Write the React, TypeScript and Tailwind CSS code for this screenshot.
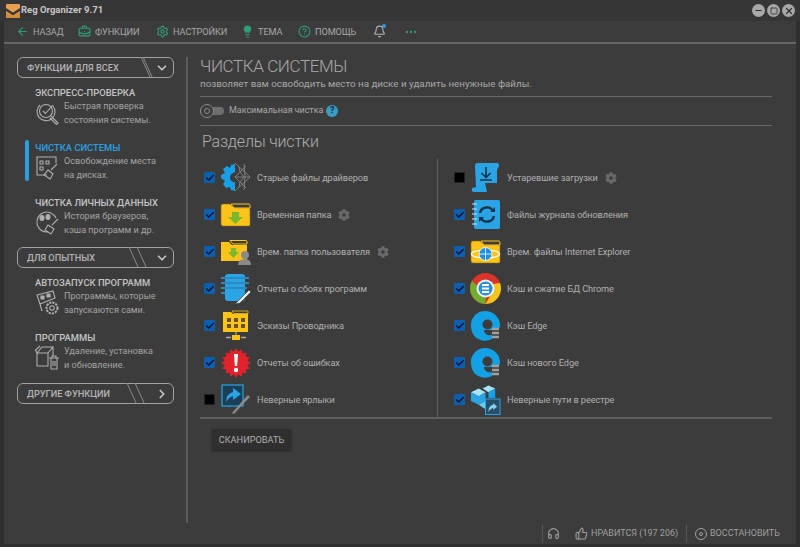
import { ArrowLeft, Bell, BriefcaseBusiness, ChevronDown, ChevronRight, CircleHelp, Ellipsis, Headphones, Lightbulb, Minus, Settings, Square, ThumbsUp, X, Check } from "lucide-react";
import { FaCog } from "react-icons/fa";
import type { ReactNode } from "react";

const font = "font-['Roboto','Open_Sans',sans-serif]";

function Logo() {
  return (
    <svg width="14" height="14" viewBox="0 0 14 14">
      <rect x="0" y="0" width="14" height="14" rx="1" fill="#e8a050" />
      <path d="M0 4 L7 8.5 L14 4 L14 7 L7 11.5 L0 7 Z" fill="#3a3a3a" />
      <path d="M0 8 L7 12.5 L14 8 V14 H0 Z" fill="#d68a3a" />
    </svg>
  );
}

function WinButton({ children }: { children: ReactNode }) {
  return (
    <div className="w-[13px] h-[13px] rounded-full bg-[#a8a8a8] flex items-center justify-center text-[#333]">
      {children}
    </div>
  );
}

function ToolItem({ icon, label, className }: { icon: ReactNode; label: string; className: string }) {
  return (
    <div className={`flex items-center gap-[4px] ${className}`}>
      {icon}
      <span className="text-[9.2px] tracking-[-0.1px] text-[#a8a8a8]">{label}</span>
    </div>
  );
}

function SectionButton({ label, open = true, stripeAt, double = true }: { label: string; open?: boolean; stripeAt: string; double?: boolean }) {
  return (
    <div className="relative ml-[13px] h-[21px] w-[157px] rounded-[6px] border border-[#a0a0a0] flex items-center justify-between pl-[9px] pr-[4px]">
      <span className="text-[9.2px] font-medium text-[#b4b4b4]">{label}</span>
      <svg width="24" height="21" viewBox="0 0 24 21" className={`absolute top-[-1px] ${stripeAt}`}>
        {double ? (
          <path d="M1 0 L10 20 M9 0 L18 20" stroke="#8a8a8a" strokeWidth="1" fill="none" />
        ) : (
          <path d="M1 0 L10 20 M3 0 L12 20" stroke="#8a8a8a" strokeWidth="1" fill="none" />
        )}
      </svg>
      {open ? (
        <ChevronDown size={14} strokeWidth={3} className="text-[#c4c4c4]" />
      ) : (
        <ChevronRight size={14} strokeWidth={3} className="text-[#c4c4c4]" />
      )}
    </div>
  );
}

function NavItem({
  title,
  lines,
  icon,
  active,
}: {
  title: string;
  lines: string[];
  icon: ReactNode;
  active?: boolean;
}) {
  return (
    <div className="relative pl-[31px] h-[41px]">
      {active && <div className="absolute left-[21px] top-[-2px] w-[4px] h-[41px] rounded-full bg-[#2a9fe0]" />}
      <div className={`text-[9.4px] leading-[12px] font-medium whitespace-nowrap ${active ? "text-[#2a9fe0]" : "text-[#c4c4c4]"}`}>
        {title}
      </div>
      <div className="flex">
        <div className="w-[29px] h-[27px] flex items-center">{icon}</div>
        <div className="text-[9.1px] leading-[14px] text-[#a4a4a4] whitespace-nowrap">
          {lines.map((l) => (
            <div key={l}>{l}</div>
          ))}
        </div>
      </div>
    </div>
  );
}

const navStroke = { fill: "none", stroke: "#b0b0b0", strokeWidth: 1.1 };

function ExpressIcon() {
  return (
    <svg width="25" height="25" viewBox="0 0 25 25" {...navStroke}>
      <path d="M5 5 A9 9 0 1 0 18 6" />
      <circle cx="11" cy="11" r="6.5" />
      <path d="M8 11 L10.5 13.5 L18 5" />
      <path d="M16 16 L23 23 L21.5 24.5 L15 18" />
    </svg>
  );
}
function CleanIcon() {
  return (
    <svg width="25" height="25" viewBox="0 0 25 25" {...navStroke}>
      <path d="M12 20 H2 V2 H21 V8" />
      <path d="M5 6 h3 v3 h-3 z M11 6 h3 v3 h-3 z M5 12 h3 v3 h-3 z" />
      <path d="M22 9 L16 15 M13 15 L18 19 L15 24 L9 20 Z" />
    </svg>
  );
}
function PrivateIcon() {
  return (
    <svg width="25" height="25" viewBox="0 0 25 25" {...navStroke}>
      <path d="M13 22 A10 10 0 1 1 21 8" />
      <ellipse cx="7" cy="8" rx="2" ry="2.5" fill="#b0b0b0" />
      <ellipse cx="13" cy="7" rx="2" ry="2.5" fill="#b0b0b0" />
      <path d="M23 9 L17 15 M13 15 L19 19 L16 24 L10 20 Z" />
    </svg>
  );
}
function AutorunIcon() {
  return (
    <svg width="25" height="25" viewBox="0 0 25 25" {...navStroke}>
      <path d="M2 5 L18 1 L20 8 L5 14 Z M5 14 L7 21" />
      <path d="M6 6 h3 v3 h-3 z M12 4 h3 v3 h-3 z" fill="#b0b0b0" />
      <circle cx="17" cy="18" r="2.2" />
      <circle cx="17" cy="18" r="5.5" strokeDasharray="2.2 1" strokeWidth="2" />
    </svg>
  );
}
function ProgramsIcon() {
  return (
    <svg width="25" height="27" viewBox="0 0 25 27" {...navStroke}>
      <path d="M2 9 L13 9 L13 22 L2 22 Z M2 9 L7 3 L18 3 L13 9 M18 3 L18 12 M2 9 L0.5 6 L5 2" />
      <path d="M14 14 H24 M16 14 V25 H22 V14 M18 17 V22 M20 17 V22 M17 14 V12 H21 V14" />
    </svg>
  );
}

function Gear() {
  return <FaCog size={12} className="text-[#6a6a6a] ml-[7px]" />;
}

function Tick({ on }: { on: boolean }) {
  if (!on) return <div className="w-[11px] h-[11px] bg-black border border-[#222]" />;
  return (
    <div className="w-[11px] h-[11px] bg-[#0a5fb0] rounded-[1px] flex items-center justify-center">
      <Check size={10} strokeWidth={3.5} className="text-[#08122a]" />
    </div>
  );
}

function Folder({ w = 31, children }: { w?: number; children?: ReactNode }) {
  return (
    <svg width={w} height="24" viewBox="0 0 31 24">
      <path d="M1 3 Q1 1 3 1 H10 L14 5 H29 Q30 5 30 7 V22 Q30 23 28 23 H3 Q1 23 1 21 Z" fill="#fcc419" stroke="#8a6a10" strokeWidth="0.6" />
      <path d="M11 1 H29 Q30 1 30 3 V5 H14 Z" fill="#3c3c3c" stroke="#fcc419" strokeWidth="1" />
      {children}
    </svg>
  );
}

function TempFolder() {
  return (
    <Folder>
      <path d="M12 9 H19 V14 H23 L15.5 21 L8 14 H12 Z" fill="#7cb82f" />
    </Folder>
  );
}

function UserFolder() {
  return (
    <svg width="31" height="26" viewBox="0 0 31 26">
      <path d="M1 3 H9 L12 6 H27 V22 H1 Z" fill="#fcc419" />
      <path d="M10 1.5 H26 Q27 1.5 27 3 V5 H13 Z" fill="#3c3c3c" stroke="#fcc419" />
      <path d="M11 9 H16 V13 H19 L13.5 19 L8 13 H11 Z" fill="#7cb82f" />
      <circle cx="25" cy="16" r="4" fill="#8a8a8a" />
      <path d="M18 26 Q18 20 25 20 Q31 20 31 26 Z" fill="#8a8a8a" />
    </svg>
  );
}

function DriverIcon() {
  return (
    <svg width="31" height="31" viewBox="0 0 31 31">
      <path d="M15 2 L15 29 L11 28 L10 25 L6 26 L3 22 L5 19 L1 16 L1 13 L5 11 L3 7 L7 4 L10 6 L11 3 Z" fill="#18a0e6" />
      <circle cx="15" cy="15.5" r="5" fill="#3c3c3c" />
      <g fill="none" stroke="#8f8f8f" strokeWidth="0.8">
        <path d="M15 1 L30 15 L15 29 M15 15 L30 15 M15 15 L26 4 M15 15 L26 26" />
        <path d="M19 5 L20 10 L24 15 L20 20 L19 25 M24 2 L25 15 L24 28" />
      </g>
    </svg>
  );
}

function NotebookIcon() {
  return (
    <svg width="31" height="31" viewBox="0 0 31 31">
      <rect x="5" y="1" width="20" height="27" rx="3" fill="#2ba4e6" />
      <g stroke="#2ba4e6" strokeWidth="1.5">
        <path d="M1 5 H29 M1 10 H29 M1 15 H27 M1 20 H22" />
      </g>
      <g stroke="#3c3c3c" strokeWidth="0.5">
        <path d="M5 5 H25 M5 10 H25 M5 15 H25" />
      </g>
      <path d="M17 29 L29 17 L31 19 L20 30 L15 31 Z" fill="#eaeaea" stroke="#3c3c3c" strokeWidth="0.7" />
    </svg>
  );
}

function ThumbFolderIcon() {
  return (
    <svg width="28" height="31" viewBox="0 0 28 31">
      <path d="M1 2 H9 L11 4 H26 V22 H1 Z" fill="#fcc419" />
      <path d="M10 1 H26 V3.5 H12 Z" fill="#3c3c3c" stroke="#fcc419" strokeWidth="0.8" />
      <g fill="#6b5200">
        <rect x="5" y="8" width="4" height="4" />
        <rect x="12" y="8" width="4" height="4" />
        <rect x="19" y="8" width="4" height="4" />
        <rect x="5" y="14" width="4" height="4" />
        <rect x="12" y="14" width="4" height="4" />
        <rect x="19" y="14" width="4" height="4" />
      </g>
      <path d="M14 22 V26" stroke="#bbb" />
      <rect x="10" y="25" width="8" height="5" fill="#fcc419" />
      <path d="M4 27.5 H9 M19 27.5 H24" stroke="#aaa" strokeWidth="1.4" />
    </svg>
  );
}

function ErrorIcon() {
  const pts: string[] = [];
  for (let i = 0; i < 32; i++) {
    const r = i % 2 === 0 ? 15 : 11.5;
    const a = (i * Math.PI) / 16;
    pts.push(`${15 + r * Math.cos(a)},${15 + r * Math.sin(a)}`);
  }
  return (
    <svg width="30" height="30" viewBox="0 0 30 30">
      <polygon points={pts.join(" ")} fill="#e2222b" />
      <path d="M13 6 H17 L16.2 18 H13.8 Z" fill="#fff" />
      <circle cx="15" cy="22" r="2.2" fill="#fff" />
    </svg>
  );
}

function ShortcutIcon() {
  return (
    <svg width="30" height="31" viewBox="0 0 30 31">
      <rect x="1" y="1" width="21" height="21" fill="#1b3f55" stroke="#2ba4e6" strokeWidth="1.2" />
      <path d="M5 18 Q5 10 12 8 V4 L20 10 L12 16 V12 Q8 13 5 18 Z" fill="#2ba4e6" />
      <path d="M11 29 L24 14 L27 11 L29 13 L26 16 L13 30 Z" fill="#8a8a8a" />
    </svg>
  );
}

function ScrollIcon() {
  return (
    <svg width="30" height="31" viewBox="0 0 30 31">
      <path d="M4 4 Q4 1 7 1 H26 Q28 1 28 4 L26 8 V21 H14 L16 30 H3 Q0 30 1 26 L5 25 Z" fill="#2ba4e6" />
      <path d="M15 5 V15 M10.5 11 L15 15.5 L19.5 11 M9 18 H21" stroke="#12364e" strokeWidth="1.6" fill="none" />
    </svg>
  );
}

function JournalIcon() {
  return (
    <svg width="30" height="31" viewBox="0 0 30 31">
      <rect x="3" y="1" width="26" height="29" rx="2" fill="#2ba4e6" />
      <path d="M1 5 H6 M1 10 H6 M1 15 H6 M1 20 H6 M1 25 H6" stroke="#cfe8f5" strokeWidth="1" />
      <path d="M9 14 A7 7 0 0 1 22 12 M23 17 A7 7 0 0 1 10 19" stroke="#103349" strokeWidth="2.4" fill="none" />
      <path d="M19 13 L24 13 L24 8 Z M13 18 L8 18 L8 23 Z" fill="#103349" />
    </svg>
  );
}

function IEFolder() {
  return (
    <Folder>
      <ellipse cx="15.5" cy="14" rx="14" ry="4" fill="none" stroke="#fff" strokeWidth="1.2" />
      <circle cx="15.5" cy="14" r="6.5" fill="#1f8fdc" stroke="#fff" strokeWidth="0.8" />
      <path d="M15.5 7.5 V20.5 M9 14 H22" stroke="#fff" strokeWidth="0.8" />
    </Folder>
  );
}

function ChromeIcon() {
  return (
    <svg width="31" height="31" viewBox="0 0 31 31">
      <circle cx="15.5" cy="15.5" r="15.5" fill="#d9352b" />
      <path d="M15.5 31 A15.5 15.5 0 0 1 2 8 L10 15.5 L15.5 22 Z" fill="#6fae2e" />
      <path d="M15.5 31 A15.5 15.5 0 0 0 30 10 L16 12 L22 20 Z" fill="#f5c518" />
      <circle cx="15.5" cy="15.5" r="9" fill="#f2f2f2" />
      <circle cx="15.5" cy="15.5" r="7" fill="#2b8fd8" />
      <path d="M12 12 H19 M12 15.5 H19 M12 19 H19" stroke="#fff" strokeWidth="2" />
    </svg>
  );
}

function EdgeIcon() {
  return (
    <svg width="31" height="32" viewBox="0 0 31 32">
      <path d="M15 1 C24 1 30 8 30 15 C30 18 29 19 27 20 L14 20 C14 24 18 26 22 25 L22 29 C14 33 2 30 1 17 C0 8 7 1 15 1 Z" fill="#14a0e4" />
      <circle cx="17.5" cy="14.5" r="5" fill="#3c3c3c" />
      <path d="M22 19 H29 M22 23 H29 M22 27 H29" stroke="#a0a0a0" strokeWidth="2.4" />
    </svg>
  );
}

function RegistryIcon() {
  return (
    <svg width="32" height="32" viewBox="0 0 32 32">
      <path d="M1 8 L9 4 L16 8 L9 12 Z M13 4 L19 1 L26 4 L19 8 Z" fill="#a8e4f8" />
      <path d="M1 8 L9 12 V21 L1 17 Z M16 8 L9 12 V21 L16 17 Z" fill="#2ba4e6" />
      <path d="M19 8 L26 4 V14 L19 14 Z" fill="#18a0e6" />
      <path d="M9 21 L16 17 L22 20 L15 25 Z" fill="#6fc8ee" />
      <rect x="16" y="15" width="15" height="16" fill="#26506a" stroke="#2ba4e6" />
      <path d="M19 28 Q19 22 24 21 V19 L28 23 L24 26 V24 Q21 25 19 28 Z" fill="#8ed0f0" />
    </svg>
  );
}

type Row = { on: boolean; icon: ReactNode; label: string; gear?: boolean };

const leftRows: Row[] = [
  { on: true, icon: <DriverIcon />, label: "Старые файлы драйверов" },
  { on: true, icon: <TempFolder />, label: "Временная папка", gear: true },
  { on: true, icon: <UserFolder />, label: "Врем. папка пользователя", gear: true },
  { on: true, icon: <NotebookIcon />, label: "Отчеты о сбоях программ" },
  { on: true, icon: <ThumbFolderIcon />, label: "Эскизы Проводника" },
  { on: true, icon: <ErrorIcon />, label: "Отчеты об ошибках" },
  { on: false, icon: <ShortcutIcon />, label: "Неверные ярлыки" },
];

const rightRows: Row[] = [
  { on: false, icon: <ScrollIcon />, label: "Устаревшие загрузки", gear: true },
  { on: true, icon: <JournalIcon />, label: "Файлы журнала обновления" },
  { on: true, icon: <IEFolder />, label: "Врем. файлы Internet Explorer" },
  { on: true, icon: <ChromeIcon />, label: "Кэш и сжатие БД Chrome" },
  { on: true, icon: <EdgeIcon />, label: "Кэш Edge" },
  { on: true, icon: <EdgeIcon />, label: "Кэш нового Edge" },
  { on: true, icon: <RegistryIcon />, label: "Неверные пути в реестре" },
];

function CleanRow({ row }: { row: Row }) {
  return (
    <div className="h-[37px] flex items-center">
      <Tick on={row.on} />
      <div className="w-[31px] ml-[5px] flex items-center justify-center">{row.icon}</div>
      <span className="ml-[6px] text-[9.2px] tracking-[-0.1px] text-[#b0b0b0] whitespace-nowrap">{row.label}</span>
      {row.gear && <Gear />}
    </div>
  );
}

export default function App() {
  return (
    <div className={`${font} w-[800px] h-[547px] bg-[#2f2f2f] flex flex-col overflow-hidden`}>
      <div className="h-[21px] shrink-0 flex items-center bg-[#363636] pl-[6px] pr-[5px]">
        <Logo />
        <span className="ml-[1px] text-[9.5px] font-bold text-[#c8c8c8]">Reg Organizer 9.71</span>
        <div className="ml-auto flex gap-[2px]">
          <WinButton><Minus size={9} strokeWidth={3} /></WinButton>
          <WinButton><Square size={8} strokeWidth={2.5} /></WinButton>
          <WinButton><X size={10} strokeWidth={3} /></WinButton>
        </div>
      </div>
      <div className="flex-1 mx-[4px] mb-[3px] bg-[#3c3c3c] flex flex-col min-h-0">
        <div className="h-[23px] shrink-0 flex items-center pl-[12px] border-b-2 border-[#666666]">
          <ToolItem className="w-[62px]" icon={<ArrowLeft size={13} className="text-[#2f9d78]" />} label="НАЗАД" />
          <ToolItem className="w-[78px]" icon={<BriefcaseBusiness size={13} className="text-[#2f9d78]" />} label="ФУНКЦИИ" />
          <ToolItem className="w-[85px]" icon={<Settings size={13} className="text-[#2f9d78]" />} label="НАСТРОЙКИ" />
          <ToolItem className="w-[57px]" icon={<Lightbulb size={13} className="text-[#2f9d78] fill-[#2f9d78]" />} label="ТЕМА" />
          <ToolItem className="w-[75px]" icon={<CircleHelp size={13} className="text-[#2f9d78]" />} label="ПОМОЩЬ" />
          <div className="relative w-[31px]">
            <Bell size={13} className="text-[#b0b0b0]" />
            <div className="absolute left-[9px] top-[-1px] w-[4px] h-[4px] rounded-full bg-[#2a9fe0]" />
          </div>
          <Ellipsis size={14} className="text-[#2f9d78]" />
        </div>
        <div className="flex-1 flex min-h-0">
          <div className="w-[184px] shrink-0 mt-[13px] border-r-2 border-[#5a5a5a]">
            <SectionButton label="ФУНКЦИИ ДЛЯ ВСЕХ" stripeAt="left-[122px]" double={false} />
            <div className="mt-[9px] flex flex-col gap-[14px]">
              <NavItem title="ЭКСПРЕСС-ПРОВЕРКА" lines={["Быстрая проверка", "состояния системы."]} icon={<ExpressIcon />} />
              <NavItem active title="ЧИСТКА СИСТЕМЫ" lines={["Освобождение места", "на дисках."]} icon={<CleanIcon />} />
              <NavItem title="ЧИСТКА ЛИЧНЫХ ДАННЫХ" lines={["История браузеров,", "кэша программ и др."]} icon={<PrivateIcon />} />
            </div>
            <div className="mt-[9px]">
              <SectionButton label="ДЛЯ ОПЫТНЫХ" stripeAt="left-[110px]" />
            </div>
            <div className="mt-[9px] flex flex-col gap-[14px]">
              <NavItem title="АВТОЗАПУСК ПРОГРАММ" lines={["Программы, которые", "запускаются сами."]} icon={<AutorunIcon />} />
              <NavItem title="ПРОГРАММЫ" lines={["Удаление, установка", "и обновление."]} icon={<ProgramsIcon />} />
            </div>
            <div className="mt-[10px]">
              <SectionButton label="ДРУГИЕ ФУНКЦИИ" open={false} stripeAt="left-[108px]" />
            </div>
          </div>
          <div className="flex-1 pl-[12px] pr-[24px] pt-[10px] min-w-0">
            <div className="text-[17px] leading-[24px] tracking-[-0.4px] font-light text-[#a8a8a8]">ЧИСТКА СИСТЕМЫ</div>
            <div className="text-[9.8px] leading-[12px] text-[#a8a8a8]">позволяет вам освободить место на диске и удалить ненужные файлы.</div>
            <div className="mt-[6px] h-[30px] border-y border-[#6a6a6a] flex items-center">
              <div className="relative w-[24px] h-[8px] rounded-full bg-[#6e6e6e]">
                <div className="absolute left-0 top-[-3px] w-[14px] h-[14px] rounded-full bg-[#3c3c3c] border border-[#8a8a8a] flex items-center justify-center">
                  <div className="w-[6px] h-[6px] rounded-full border border-[#8a8a8a]" />
                </div>
              </div>
              <span className="ml-[5px] text-[9px] tracking-[-0.05px] text-[#a8a8a8]">Максимальная чистка</span>
              <div className="ml-[3px] w-[12px] h-[12px] rounded-full bg-[#3a9cc0] flex items-center justify-center text-[9px] font-bold text-[#12303f]">?</div>
            </div>
            <div className="mt-[4px] ml-[2px] text-[16px] leading-[24px] tracking-[-0.2px] font-light text-[#b0b0b0]">Разделы чистки</div>
            <div className="mt-[5px] h-[260px] grid grid-cols-[238px_1fr] border-b-2 border-[#5e5e5e]">
              <div className="border-r border-[#5e5e5e] pl-[4px]">
                {leftRows.map((r) => (
                  <CleanRow key={r.label} row={r} />
                ))}
              </div>
              <div className="pl-[16px]">
                {rightRows.map((r) => (
                  <CleanRow key={r.label} row={r} />
                ))}
              </div>
            </div>
            <button className="mt-[10px] ml-[12px] w-[79px] h-[21px] bg-[#2f2f2f] text-[9.2px] text-[#b0b0b0] shadow-[0_1px_2px_#222]">
              СКАНИРОВАТЬ
            </button>
          </div>
        </div>
        <div className="h-[21px] shrink-0 flex items-center pl-[538px] text-[#a0a0a0]">
          <div className="h-[18px] w-[26px] flex items-center border-l border-[#555] pl-[4px]">
            <Headphones size={13} />
          </div>
          <div className="h-[18px] w-[117px] ml-[2px] flex items-center gap-[3px] border-r border-[#555] pl-[5px]">
            <ThumbsUp size={13} />
            <span className="text-[9px]">НРАВИТСЯ (197 206)</span>
          </div>
          <div className="flex items-center gap-[3px] pl-[8px]">
            <div className="w-[12px] h-[12px] rounded-full border border-[#a0a0a0] flex items-center justify-center">
              <div className="w-[4px] h-[4px] rounded-full border border-[#a0a0a0]" />
            </div>
            <span className="text-[9px]">ВОССТАНОВИТЬ</span>
          </div>
        </div>
      </div>
    </div>
  );
}
